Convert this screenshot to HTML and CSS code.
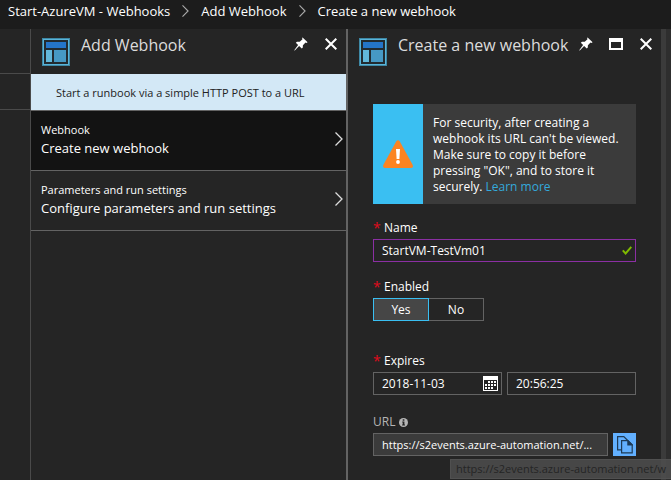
FILE: index.html
```html
<!DOCTYPE html>
<html lang="en">
<head>
<meta charset="utf-8">
<title>Create a new webhook</title>
<link rel="stylesheet" href="styles.css">
</head>
<body>
<svg class="defs" aria-hidden="true">
  <symbol id="blade" viewBox="0 0 28 28">
    <path fill="#59b4d9" d="M0 0h28v28H0z"/>
    <path fill="#3e88a5" d="M0 0h28v1H0zM0 27h28v1H0zM0 0h1v28H0zM27 0h1v28h-1z"/>
    <path fill="#222b30" d="M2 2h24v24H2z"/>
    <path fill="#2475c9" d="M4 4h20v6H4z"/>
    <path fill="#62b8da" d="M4 12h6v12H4z"/>
    <path fill="#4699c4" d="M12 12h12v12H12z"/>
  </symbol>
  <symbol id="pin" viewBox="0 0 14 14">
    <path fill="#fff" d="M8.6.4 13.6 5.2 12.4 5.9 11.5 5.6 8.9 8.2 8.8 10.6 7.8 11.6 5.1 9 .8 13.4.2 13.2 4.1 8 1.8 5.8 3 4.8 5.7 4.8 8.5 2.3 8.1 1.1z"/>
  </symbol>
  <symbol id="close" viewBox="0 0 12 12">
    <path fill="none" stroke="#fff" stroke-width="2" d="M.7.7l10.6 10.6M11.3.7.7 11.3"/>
  </symbol>
  <symbol id="chevron" viewBox="0 0 8 14">
    <path fill="none" stroke="currentColor" stroke-width="1.3" d="M.5.5 7 7 .5 13.5"/>
  </symbol>
</svg>
<nav class="crumbs" aria-label="Breadcrumb">
  <a href="#">Start-AzureVM - Webhooks</a>
  <svg class="sep"><use href="#chevron"/></svg>
  <a href="#">Add Webhook</a>
  <svg class="sep"><use href="#chevron"/></svg>
  <a href="#">Create a new webhook</a>
</nav>
<main class="blades">
  <div class="edge"><div class="edge-head"></div><div class="edge-bar"></div></div>
  <section class="blade">
    <header class="head">
      <svg class="logo"><use href="#blade"/></svg>
      <h1>Add Webhook</h1>
      <button class="icon" aria-label="Pin"><svg class="i-pin"><use href="#pin"/></svg></button>
      <button class="icon" aria-label="Close"><svg class="i-close"><use href="#close"/></svg></button>
    </header>
    <p class="banner">Start a runbook via a simple HTTP POST to a URL</p>
    <button class="row selected">
      <span class="row-text"><span class="row-label">Webhook</span><span class="row-value">Create new webhook</span></span>
      <svg class="arrow"><use href="#chevron"/></svg>
    </button>
    <button class="row">
      <span class="row-text"><span class="row-label">Parameters and run settings</span><span class="row-value">Configure parameters and run settings</span></span>
      <svg class="arrow"><use href="#chevron"/></svg>
    </button>
  </section>
  <section class="blade last">
    <header class="head">
      <svg class="logo"><use href="#blade"/></svg>
      <h1>Create a new webhook</h1>
      <button class="icon" aria-label="Pin"><svg class="i-pin"><use href="#pin"/></svg></button>
      <button class="icon" aria-label="Maximize"><svg class="i-max" viewBox="0 0 14 12"><path fill="#fff" fill-rule="evenodd" d="M0 0h14v12H0zM2 4v6h10V4z"/></svg></button>
      <button class="icon" aria-label="Close"><svg class="i-close"><use href="#close"/></svg></button>
    </header>
    <form class="form">
      <div class="notice">
        <div class="notice-icon">
          <svg viewBox="0 0 30 28"><path fill="#fb8422" d="M13.2 1.4q1.8-2.4 3.6 0l12.8 23.4q1 2.8-1.6 3.2H2q-2.6-.4-1.6-3.2z"/><path fill="#fff" d="M13 9h4l-.6 10h-2.8z"/><circle cx="15" cy="22" r="1.9" fill="#fff"/></svg>
        </div>
        <p>For security, after creating a webhook its URL can't be viewed. Make sure to copy it before pressing "OK", and to store it securely. <a href="#">Learn more</a></p>
      </div>
      <div class="field">
        <label for="name"><span class="req">*</span>Name</label>
        <div class="box valid">
          <input id="name" type="text" value="StartVM-TestVm01">
          <svg class="check" viewBox="0 0 10 9"><path fill="none" stroke="#7fba00" stroke-width="2" d="M.8 4.4 3.6 7.4 9.3.8"/></svg>
        </div>
      </div>
      <div class="field enabled">
        <span class="label" id="enabled"><span class="req">*</span>Enabled</span>
        <div class="toggle" role="group" aria-labelledby="enabled">
          <button type="button" class="on" aria-pressed="true">Yes</button>
          <button type="button" aria-pressed="false">No</button>
        </div>
      </div>
      <div class="field">
        <label for="date"><span class="req">*</span>Expires</label>
        <div class="pair">
          <div class="box">
            <input id="date" type="text" value="2018-11-03">
            <svg class="calendar" viewBox="0 0 15 15"><path fill="#fff" d="M0 0h15v15H0z"/><path fill="#252525" d="M1 4h13v10H1z"/><path fill="#fff" d="M5 5h2v2H5zM8 5h2v2H8zM11 5h2v2h-2zM2 8h2v2H2zM5 8h2v2H5zM8 8h2v2H8zM11 8h2v2h-2zM2 11h2v2H2zM5 11h2v2H5zM8 11h2v2H8z"/></svg>
          </div>
          <div class="box"><input type="text" value="20:56:25" aria-label="Expiry time"></div>
        </div>
      </div>
      <div class="field url">
        <label for="url">URL <svg class="info" viewBox="0 0 9 9"><circle cx="4.500" cy="4.500" r="4.500" fill="#b5b5b5"/><path fill="#252525" d="M3.700 1.300h1.700v1.500H3.700zM3.200 3.600h2.200v3h.6v1H3.100v-1h.6v-2h-.5z"/></svg></label>
        <div class="pair">
          <div class="box filled"><input id="url" type="text" readonly value="https://s2events.azure-automation.net/..."></div>
          <button type="button" class="copy" aria-label="Copy"><svg viewBox="0 0 16 18"><g fill="#62b0ff" stroke="#1d3b57" stroke-width="1.200"><path d="M.6.6h6.200l3.200 3.200v10H.6z"/><path d="M4.600 4.600h6.300l4.300 4.300v8H4.600z"/><path d="M10.900 4.600v4.300h4.300z" fill="#1d3b57"/></g></svg></button>
        </div>
        <div class="tip" role="tooltip">https://s2events.azure-automation.net/w</div>
      </div>
    </form>
  </section>
</main>
</body>
</html>
```
FILE: styles.css
```css
* { box-sizing: border-box; }

body {
  margin: 0;
  min-height: 100vh;
  display: flex;
  flex-direction: column;
  overflow: hidden;
  background: #252525;
  color: #fff;
  font: 12px/16px "Open Sans", "Noto Sans", sans-serif;
}

h1, p { margin: 0; font-weight: 400; }
button, input { font: inherit; color: inherit; border: 0; padding: 0; background: none; border-radius: 0; }
svg { display: block; flex: none; }
.defs { position: absolute; width: 0; height: 0; }

.crumbs {
  display: flex;
  align-items: center;
  height: 29px;
  padding: 0 8px 8px;
  background: #1c1c1c;
  font-size: 13px;
  white-space: nowrap;
}
.crumbs a { color: #fff; text-decoration: none; }
.sep { width: 7px; height: 12px; margin: 0 12px; color: #aaa; }

.blades {
  flex: 1;
  display: grid;
  grid-template-columns: 31px minmax(0, 317fr) minmax(0, 323fr);
}
.edge { border-right: 1px solid #4a4a4a; }
.edge-head { height: 45px; border-bottom: 1px solid #4a4a4a; }
.edge-bar { height: 36px; border-bottom: 1px solid #4a4a4a; }

.blade { border-right: 2px solid #636363; min-width: 0; }
.blade.last { border-right: 5px solid #3b3b3b; margin-right: 5px; box-shadow: 5px 0 #2e2e2e; }

.head { display: flex; align-items: flex-start; height: 45px; padding: 8px 8px 0 11px; }
.logo { width: 28px; height: 28px; margin-top: 1px; }
.head h1 {
  flex: 1;
  min-width: 0;
  margin-left: 11px;
  font-size: 16px;
  line-height: 16px;
  color: #dcdcdc;
  white-space: nowrap;
}
.icon { display: grid; place-items: center; width: 14px; height: 14px; margin-left: 16px; }
.head h1 + .icon { margin-left: 8px; }
.i-pin { width: 14px; height: 14px; }
.i-close { width: 12px; height: 12px; }
.i-max { width: 14px; height: 12px; }

.banner {
  height: 37px;
  padding: 11px 25px 0;
  border-bottom: 1px solid #636363;
  background: #d3e8f6;
  color: #222;
  font-size: 11px;
}
.row {
  display: flex;
  align-items: center;
  justify-content: space-between;
  width: 100%;
  height: 60px;
  padding: 0 3px 4px 10px;
  border-bottom: 1px solid #636363;
  text-align: left;
}
.row.selected { background: #131313; }
.row-label, .row-value { display: block; line-height: 19px; }
.row-label { font-size: 11px; }
.row-value { font-size: 13px; }
.arrow { width: 8px; height: 14px; color: #ddd; }

.form { padding: 30px 25px 0; }
.notice { display: flex; min-height: 100px; background: #3b3b3b; }
.notice-icon { display: grid; place-items: center; flex: none; width: 50px; background: #3abff2; }
.notice-icon svg { width: 30px; height: 28px; }
.notice p { padding: 11px 10px 9px; }
.notice a { color: #34a9dc; text-decoration: none; }

.field { margin-top: 16px; }
.field.enabled { margin: 17px 0 32px; }
.field label, .label { display: flex; align-items: center; height: 16px; margin-bottom: 3px; }
.req { width: 11px; color: #e00b1c; font-size: 14px; }
.box {
  display: flex;
  align-items: center;
  flex: 1;
  min-width: 0;
  height: 23px;
  padding: 0 3px 0 8px;
  border: 1px solid #636363;
}
.box input { flex: 1; min-width: 0; width: 0; height: 21px; outline: 0; }
.box.valid { border-color: #8b2fa3; }
.box.filled { background: #3b3b3b; font-size: 11px; }
.check { width: 10px; height: 9px; }
.calendar { width: 15px; height: 15px; }
.pair { display: flex; gap: 5px; }
.toggle { display: flex; }
.toggle button { width: 55px; height: 23px; border: 1px solid #636363; border-left: 0; }
.toggle .on { width: 56px; border: 1px solid #3abff2; background: #464646; }

.field.url { position: relative; margin-top: 19px; }
.url label { gap: 4px; color: #b5b5b5; }
.info { width: 9px; height: 9px; }
.copy { display: grid; place-items: center; flex: none; width: 23px; height: 23px; background: #62b0ff; }
.copy svg { width: 16px; height: 18px; }
.tip {
  position: absolute;
  top: 45px;
  left: 77px;
  height: 20px;
  padding: 1px 5px;
  border: 1px solid #505050;
  background: rgba(80, 80, 80, .8);
  color: #252525;
  font-size: 11px;
  white-space: nowrap;
}
```
